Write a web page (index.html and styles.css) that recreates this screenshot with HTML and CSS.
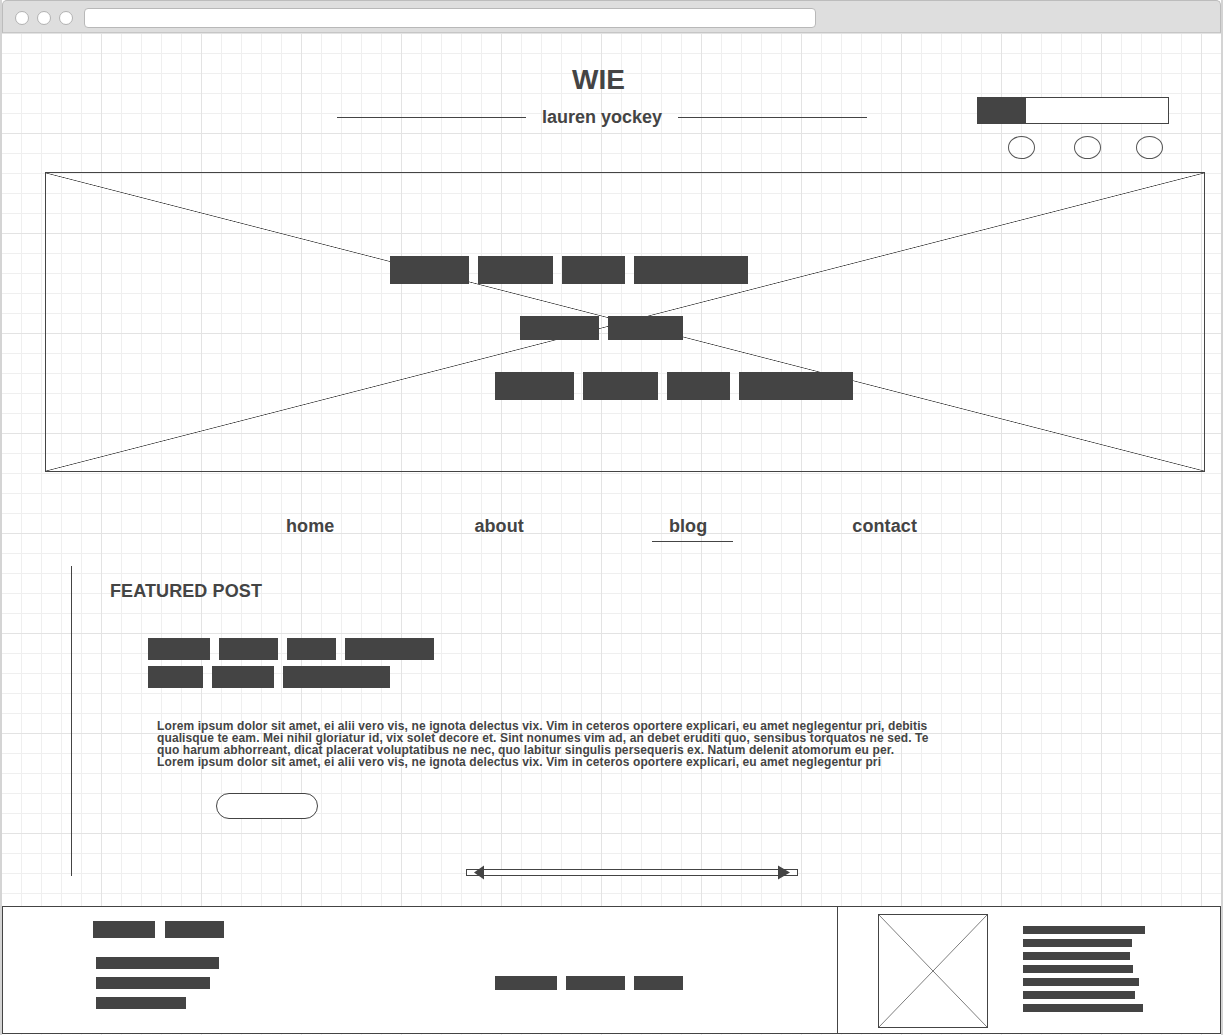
FILE: index.html
```html
<!DOCTYPE html>
<html lang="en">
<head>
<meta charset="UTF-8" />
<meta name="viewport" content="width=device-width, initial-scale=1" />
<title>WIE - lauren yockey</title>
<link rel="stylesheet" href="styles.css">
</head>
<body>

<div class="window">
  <div class="chrome">
    <span class="dot"></span>
    <span class="dot"></span>
    <span class="dot"></span>
    <div class="address"></div>
  </div>

  <div class="canvas">
    <header class="masthead">
      <div class="brand">
        <h1 class="brand-title">WIE</h1>
        <div class="byline">
          <span class="rule"></span>
          <span class="byline-name">lauren yockey</span>
          <span class="rule"></span>
        </div>
      </div>
      <div class="widgets">
        <div class="meter"><div class="meter-fill"></div></div>
        <div class="socials">
          <span class="social"></span>
          <span class="social"></span>
          <span class="social"></span>
        </div>
      </div>
    </header>

    <section class="hero">
      <div class="hero-row row-a">
        <span class="bar" style="width:79px"></span>
        <span class="bar" style="width:75px"></span>
        <span class="bar" style="width:63px"></span>
        <span class="bar" style="width:114px"></span>
      </div>
      <div class="hero-row row-b">
        <span class="bar" style="width:79px"></span>
        <span class="bar" style="width:75px"></span>
      </div>
      <div class="hero-row row-c">
        <span class="bar" style="width:79px"></span>
        <span class="bar" style="width:75px"></span>
        <span class="bar" style="width:63px"></span>
        <span class="bar" style="width:114px"></span>
      </div>
    </section>

    <nav class="nav">
      <a class="nav-item" href="#">home</a>
      <a class="nav-item about" href="#">about</a>
      <a class="nav-item active" href="#">blog</a>
      <a class="nav-item" href="#">contact</a>
    </nav>

    <section class="featured">
      <h2 class="featured-title">FEATURED POST</h2>
      <div class="headline">
        <div class="headline-row">
          <span class="bar" style="width:62px"></span>
          <span class="bar" style="width:59px"></span>
          <span class="bar" style="width:49px"></span>
          <span class="bar" style="width:89px"></span>
        </div>
        <div class="headline-row">
          <span class="bar" style="width:55px"></span>
          <span class="bar" style="width:62px"></span>
          <span class="bar" style="width:107px"></span>
        </div>
      </div>
      <p class="excerpt">
        Lorem ipsum dolor sit amet, ei alii vero vis, ne ignota delectus vix. Vim in ceteros oportere explicari, eu amet neglegentur pri, debitis<br />
        qualisque te eam. Mei nihil gloriatur id, vix solet decore et. Sint nonumes vim ad, an debet eruditi quo, sensibus torquatos ne sed. Te<br />
        quo harum abhorreant, dicat placerat voluptatibus ne nec, quo labitur singulis persequeris ex. Natum delenit atomorum eu per.<br />
        Lorem ipsum dolor sit amet, ei alii vero vis, ne ignota delectus vix. Vim in ceteros oportere explicari, eu amet neglegentur pri
      </p>
      <span class="pill"></span>
      <svg class="slider" width="332" height="15" viewBox="0 0 332 15">
        <rect x="0.5" y="4.5" width="331" height="6" fill="#fff" stroke="#444" stroke-width="1" />
        <polygon points="8,7.5 18,0.5 18,14.5" fill="#444" />
        <polygon points="312,0.5 324,7.5 312,14.5" fill="#444" />
      </svg>
    </section>

    <footer class="footer">
      <div class="footer-main">
        <div class="footer-about">
          <div class="footer-tags">
            <span class="bar" style="width:62px"></span>
            <span class="bar" style="width:59px"></span>
          </div>
          <div class="footer-lines">
            <span class="bar" style="width:123px"></span>
            <span class="bar" style="width:114px"></span>
            <span class="bar" style="width:90px"></span>
          </div>
        </div>
        <div class="footer-links">
          <span class="bar" style="width:62px"></span>
          <span class="bar" style="width:59px"></span>
          <span class="bar" style="width:49px"></span>
        </div>
      </div>
      <div class="footer-aside">
        <div class="thumb"></div>
        <div class="aside-lines">
          <span class="bar" style="width:122px"></span>
          <span class="bar" style="width:109px"></span>
          <span class="bar" style="width:107px"></span>
          <span class="bar" style="width:110px"></span>
          <span class="bar" style="width:116px"></span>
          <span class="bar" style="width:112px"></span>
          <span class="bar" style="width:120px"></span>
        </div>
      </div>
    </footer>
  </div>
</div>

</body>
</html>
```

FILE: styles.css
```css
body {
  margin: 0;
  background: #fff;
  font-family: 'Liberation Sans', Arial, sans-serif;
  color: #444;
}
.window {
  width: 1223px;
  height: 1035px;
  box-sizing: border-box;
  border-left: 2px solid #d4d4d4;
  border-right: 2px solid #d4d4d4;
  overflow: hidden;
}
.chrome {
  height: 33px;
  box-sizing: border-box;
  display: flex;
  align-items: center;
  padding: 2px 0 0 12px;
  background: #dedede;
  border: 1px solid #bcbcbc;
  border-bottom-color: #c6c6c6;
  border-radius: 5px 5px 0 0;
}
.dot {
  width: 14px;
  height: 14px;
  box-sizing: border-box;
  border-radius: 50%;
  background: #fff;
  border: 1px solid #b2b2b2;
  margin-right: 8px;
}
.address {
  margin-left: 3px;
  width: 732px;
  height: 20px;
  box-sizing: border-box;
  background: #fff;
  border: 1px solid #b8b8b8;
  border-radius: 4px;
}
.canvas {
  height: 1002px;
  background-color: #fff;
  background-image:
    linear-gradient(to right, #e3e3e3 1px, transparent 1px),
    linear-gradient(to bottom, #e3e3e3 1px, transparent 1px),
    linear-gradient(to right, #efefef 1px, transparent 1px),
    linear-gradient(to bottom, #efefef 1px, transparent 1px);
  background-size: 100px 100px, 100px 100px, 20px 20px, 20px 20px;
  background-position: 99px 0, 0 0, 19px 0, 0 0;
  overflow: hidden;
}
.bar {
  display: block;
  background: #444;
}

/* header */
.masthead {
  display: flex;
  align-items: flex-start;
  padding-left: 335px;
}
.brand {
  width: 530px;
  padding-top: 31px;
}
.brand-title {
  margin: 0;
  padding-right: 7px;
  font-size: 28px;
  line-height: 32px;
  text-align: center;
}
.byline {
  display: flex;
  align-items: center;
  margin-top: 11px;
  height: 20px;
}
.rule {
  flex: 1;
  height: 1px;
  background: #444;
}
.byline-name {
  margin: 0 16px;
  font-size: 18px;
  line-height: 20px;
  font-weight: bold;
}
.widgets {
  margin-left: 110px;
  padding-top: 64px;
}
.meter {
  width: 192px;
  height: 27px;
  box-sizing: border-box;
  border: 1px solid #444;
  background: #fff;
}
.meter-fill {
  width: 48px;
  height: 100%;
  background: #444;
}
.socials {
  display: flex;
  margin-top: 12px;
  padding-left: 31px;
}
.social {
  width: 27px;
  height: 23px;
  box-sizing: border-box;
  border: 1.5px solid #555;
  border-radius: 50%;
}
.social + .social { margin-left: 39px; }
.social + .social + .social { margin-left: 35px; }

/* hero */
.hero {
  width: 1160px;
  height: 300px;
  box-sizing: border-box;
  margin: 13px 0 0 43px;
  padding-top: 83px;
  border: 1px solid #444;
  background:
    linear-gradient(to top right, transparent calc(50% - 0.7px), #444 50%, transparent calc(50% + 0.7px)),
    linear-gradient(to bottom right, transparent calc(50% - 0.7px), #444 50%, transparent calc(50% + 0.7px));
}
.hero-row {
  display: flex;
  gap: 9px;
  height: 28px;
}
.row-a { padding-left: 344px; }
.row-b {
  height: 24px;
  margin-top: 32px;
  padding-left: 474px;
}
.row-c {
  margin-top: 32px;
  padding-left: 449px;
}

/* nav */
.nav {
  display: flex;
  align-items: flex-start;
  gap: 145px;
  margin-top: 44px;
  padding-left: 284px;
}
.nav-item {
  font-size: 18px;
  line-height: 20px;
  font-weight: bold;
  color: #444;
  text-decoration: none;
  letter-spacing: 0.1px;
}
.nav-item.about { margin-left: -5px; }
.nav-item.active {
  padding: 0 26px 5px 17px;
  margin: 0 -26px -6px -17px;
  border-bottom: 1px solid #444;
}

/* featured */
.featured {
  height: 310px;
  margin: 30px 0 0 69px;
  padding-left: 38px;
  border-left: 1px solid #444;
}
.featured-title {
  margin: 0;
  padding-top: 15px;
  font-size: 18px;
  line-height: 20px;
  letter-spacing: 0.1px;
}
.headline {
  margin-top: 37px;
  padding-left: 38px;
}
.headline-row {
  display: flex;
  gap: 9px;
  height: 22px;
}
.headline-row + .headline-row {
  margin-top: 6px;
}
.excerpt {
  margin: 32px 0 0;
  padding-left: 47px;
  font-size: 12px;
  line-height: 12px;
  font-weight: bold;
  letter-spacing: 0.11px;
  white-space: nowrap;
}
.pill {
  display: block;
  width: 102px;
  height: 26px;
  box-sizing: border-box;
  margin: 25px 0 0 106px;
  border: 1px solid #444;
  border-radius: 13px;
  background: #fff;
}
.slider {
  display: block;
  margin: 46px 0 0 356px;
}

/* footer */
.footer {
  display: flex;
  height: 128px;
  box-sizing: border-box;
  margin-top: 30px;
  border: 1px solid #444;
  background: #fff;
}
.footer-main {
  display: flex;
  width: 835px;
  box-sizing: border-box;
  border-right: 1px solid #444;
}
.footer-about {
  width: 492px;
  box-sizing: border-box;
  padding: 14px 0 0 90px;
}
.footer-tags {
  display: flex;
  gap: 10px;
}
.footer-tags .bar { height: 17px; }
.footer-lines {
  display: flex;
  flex-direction: column;
  gap: 8px;
  margin-top: 19px;
  padding-left: 3px;
}
.footer-lines .bar { height: 12px; }
.footer-links {
  display: flex;
  align-items: flex-start;
  gap: 9px;
  padding-top: 69px;
}
.footer-links .bar { height: 14px; }
.footer-aside {
  display: flex;
  align-items: flex-start;
  padding: 7px 0 0 40px;
}
.thumb {
  width: 110px;
  height: 114px;
  box-sizing: border-box;
  border: 1px solid #444;
  background:
    linear-gradient(to top right, transparent calc(50% - 0.7px), #7a7a7a 50%, transparent calc(50% + 0.7px)),
    linear-gradient(to bottom right, transparent calc(50% - 0.7px), #7a7a7a 50%, transparent calc(50% + 0.7px));
}
.aside-lines {
  display: flex;
  flex-direction: column;
  gap: 5px;
  margin-left: 35px;
  padding-top: 12px;
}
.aside-lines .bar { height: 8px; }
```
